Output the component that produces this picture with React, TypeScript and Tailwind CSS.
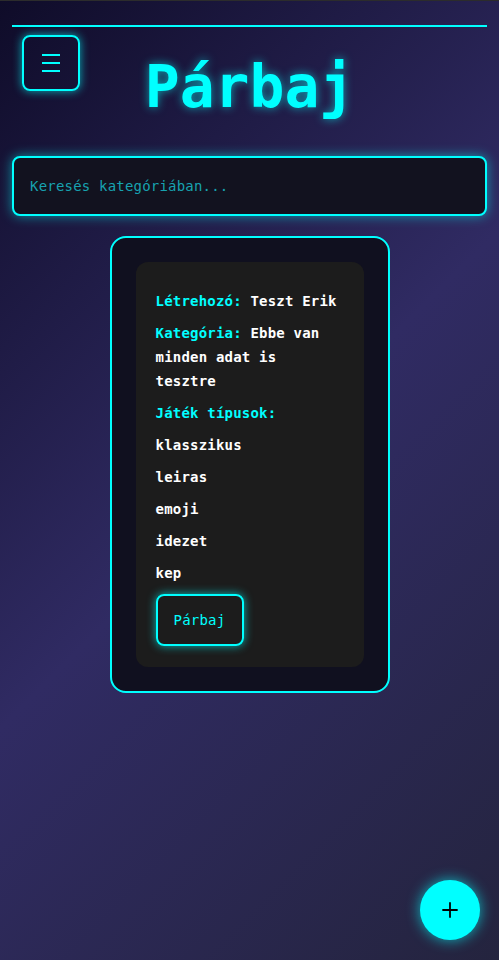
import React from 'react';
import { Plus } from 'lucide-react';

const gameTypes = ['klasszikus', 'leiras', 'emoji', 'idezet', 'kep'];

export default function App() {
  return (
    <div className="min-h-[960px] w-full bg-[linear-gradient(135deg,#0f0c29_0%,#302b63_50%,#24243e_100%)] font-['DejaVu_Sans_Mono',monospace] text-white relative">
      <div className="h-px bg-[#2c2c2c]" />
      {/* Header */}
      <header className="mx-3 mt-6 border-t-2 border-[#00ffff] relative h-[131px]">
        <button className="absolute left-[10px] top-2 w-[58px] h-[56px] rounded-lg border-2 border-[#00ffff] shadow-[0_0_10px_#00ffffaa] flex items-center justify-center">
          <span className="flex flex-col gap-[6px]">
            <span className="block w-[18px] h-[2px] bg-[#00ffff]" />
            <span className="block w-[18px] h-[2px] bg-[#00ffff]" />
            <span className="block w-[18px] h-[2px] bg-[#00ffff]" />
          </span>
        </button>
        <h1 className="text-center pt-[25px] text-[58px] leading-[70px] font-bold text-[#00ffff] [text-shadow:0_0_10px_#00ffff99]">
          Párbaj
        </h1>
      </header>

      {/* Search */}
      <div className="mx-3">
        <input
          placeholder="Keresés kategóriában..."
          className="w-full h-[60px] rounded-lg border-2 border-[#00ffff] bg-[#12121f] px-4 text-[14px] tracking-[0.2px] text-[#00ffff] placeholder:text-[#17a2b0] shadow-[0_0_12px_#00ffff88] outline-none"
        />
      </div>

      {/* Card */}
      <div className="flex justify-center mt-5">
        <div className="w-[280px] rounded-2xl border-2 border-[#00ffff] bg-[#10101f] p-6">
          <div className="rounded-xl bg-[#1c1c1c] px-5 pt-[27px] pb-[21px] text-[14px] leading-6 tracking-[0.2px] font-semibold">
            <p className="mb-2">
              <span className="font-bold text-[#00ffff]">Létrehozó:</span> Teszt Erik
            </p>
            <p className="mb-2">
              <span className="font-bold text-[#00ffff]">Kategória:</span> Ebbe van minden adat is tesztre
            </p>
            <p className="mb-2 font-bold text-[#00ffff]">Játék típusok:</p>
            {gameTypes.map((t) => (
              <p key={t} className="mb-2">{t}</p>
            ))}
            <button className="mt-px w-[88px] h-[52px] rounded-lg border-2 border-[#00ffff] text-[#00ffff] text-[14px] font-normal shadow-[0_0_10px_#00ffffaa]">
              Párbaj
            </button>
          </div>
        </div>
      </div>

      {/* FAB */}
      <button className="absolute right-[19px] top-[880px] w-[60px] h-[60px] rounded-full bg-[#00ffff] flex items-center justify-center shadow-[0_0_14px_#00ffffaa]">
        <Plus size={24} strokeWidth={1.8} className="text-black" />
      </button>
    </div>
  );
}
